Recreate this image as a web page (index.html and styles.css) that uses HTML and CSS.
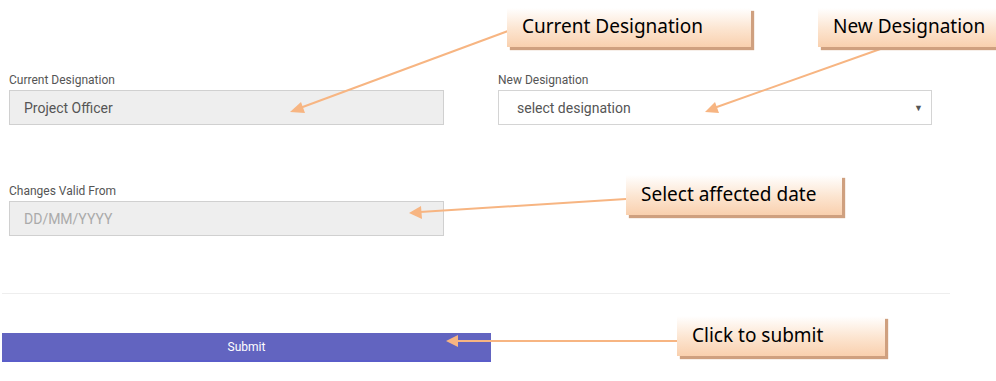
FILE: index.html
```html
<!DOCTYPE html>
<html lang="en">
<head>
  <meta charset="UTF-8" />
  <title>Change Designation</title>
  <link rel="stylesheet" href="styles.css">
</head>
<body>
  <div class="page">
    <form class="form">
      <div class="row">
        <div class="field">
          <label>Current Designation</label>
          <div class="input readonly">Project Officer</div>
        </div>
        <div class="field">
          <label>New Designation</label>
          <div class="input select">
            <span>select designation</span>
            <span class="caret">&#9660;</span>
          </div>
        </div>
      </div>

      <div class="row second">
        <div class="field">
          <label>Changes Valid From</label>
          <div class="input readonly placeholder">DD/MM/YYYY</div>
        </div>
      </div>

      <hr class="divider">

      <button type="button" class="submit">Submit</button>
    </form>

    <!-- annotations -->
    <svg class="arrows" width="996" height="381" viewBox="0 0 996 381">
      <g stroke="#f7b582" stroke-width="2" fill="#f7b582">
        <line x1="508" y1="31" x2="300" y2="108" />
        <polygon points="290,112 301,102 305,113" stroke="none" />
        <line x1="886" y1="47" x2="714" y2="108" />
        <polygon points="705,112 715,102 719,113" stroke="none" />
        <line x1="626" y1="199" x2="420" y2="212" />
        <polygon points="409,213 421,206 422,219" stroke="none" />
        <line x1="677" y1="341" x2="456" y2="341" />
        <polygon points="446,341 458,335 458,347" stroke="none" />
      </g>
    </svg>

    <div class="callout c-current">Current Designation</div>
    <div class="callout c-new">New Designation</div>
    <div class="callout c-date">Select affected date</div>
    <div class="callout c-submit">Click to submit</div>
  </div>
</body>
</html>
```

FILE: styles.css
```css
body {
  margin: 0;
  background: #fff;
  font-family: Roboto, "Liberation Sans", sans-serif;
}

.page {
  position: relative;
  width: 996px;
  height: 381px;
  overflow: hidden;
}

.form {
  padding: 72px 0 0 2px;
}

.row {
  display: grid;
  grid-template-columns: 435px 434px;
  column-gap: 54px;
  padding-left: 7px;
}

.row.second {
  margin-top: 58px;
}

.field label {
  display: block;
  font-size: 12px;
  line-height: 16px;
  color: #555;
  margin-bottom: 2px;
}

.input {
  box-sizing: border-box;
  height: 35px;
  padding: 0 14px;
  display: flex;
  align-items: center;
  justify-content: space-between;
  font-size: 14px;
  color: #555;
  border: 1px solid #d4d4d4;
  background: #fff;
}

.input.readonly {
  background: #eee;
  border-color: #d0d0d0;
}

.input.placeholder {
  color: #aaa;
}

.input.select {
  padding: 0 8px 0 18px;
}

.caret {
  font-size: 9px;
  color: #555;
}

.divider {
  border: none;
  border-top: 1px solid #eee;
  width: 948px;
  margin: 57px 0 0 0;
}

.submit {
  display: block;
  margin-top: 39px;
  width: 489px;
  height: 29px;
  padding-top: 2px;
  border: none;
  border-bottom: 2px solid #5a5dc9;
  background: #6264c0;
  color: #fff;
  font-family: Roboto, "Liberation Sans", sans-serif;
  font-size: 12px;
}

.arrows {
  position: absolute;
  left: 0;
  top: 0;
}

.callout {
  position: absolute;
  box-sizing: border-box;
  font-family: "Noto Sans", "Open Sans", sans-serif;
  font-size: 19px;
  color: #000;
  padding-left: 15px;
  padding-bottom: 3px;
  display: flex;
  align-items: center;
  background: linear-gradient(#fff 0%, #fce4cf 55%, #f9d0ae 100%);
  box-shadow: 3px 3px 1px #cfa07f;
}

.c-current {
  left: 507px;
  top: 8px;
  width: 244px;
  height: 39px;
}

.c-new {
  left: 818px;
  top: 8px;
  width: 190px;
  height: 39px;
}

.c-date {
  left: 626px;
  top: 175px;
  width: 216px;
  height: 40px;
}

.c-submit {
  left: 677px;
  top: 316px;
  width: 208px;
  height: 40px;
}
```
